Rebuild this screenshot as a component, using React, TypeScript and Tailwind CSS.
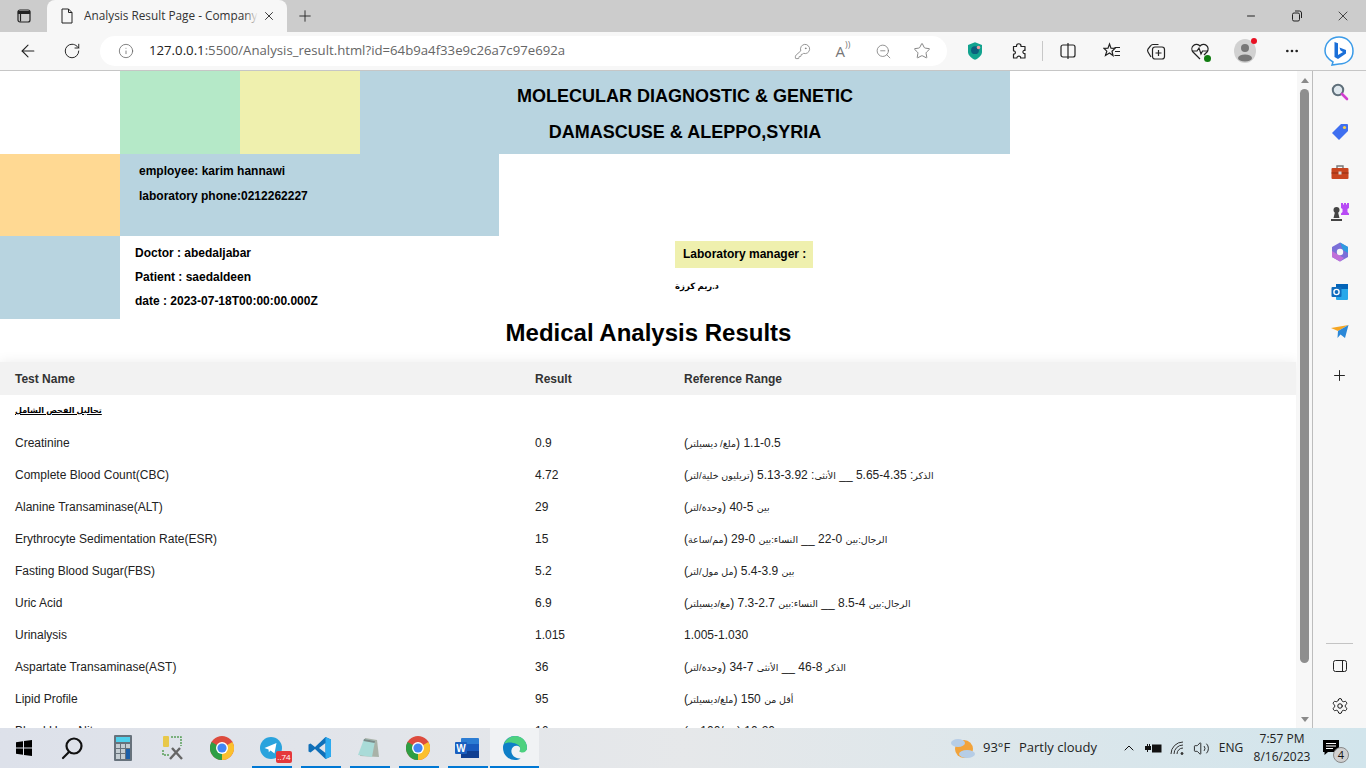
import { ArrowLeft, ChevronUp, Info, Minus, MoreHorizontal, Plus, RotateCw, Settings, Star, Volume2, X, ZoomOut, KeyRound } from 'lucide-react'

const rows = [
  { name: 'Creatinine', result: '0.9', range: '(ملغ/ ديسيلتر) 0.5-1.1' },
  { name: 'Complete Blood Count(CBC)', result: '4.72', range: 'الذكر: 4.35-5.65 __ الأنثى: 3.92-5.13 (تريليون خلية/لتر)' },
  { name: 'Alanine Transaminase(ALT)', result: '29', range: 'بين 5-40 (وحدة/لتر)' },
  { name: 'Erythrocyte Sedimentation Rate(ESR)', result: '15', range: 'الرجال:بين 0-22 __ النساء:بين 0-29 (مم/ساعة)' },
  { name: 'Fasting Blood Sugar(FBS)', result: '5.2', range: 'بين 3.9-5.4 (مل مول/لتر)' },
  { name: 'Uric Acid', result: '6.9', range: 'الرجال:بين 4-8.5 __ النساء:بين 2.7-7.3 (مغ/ديسيلتر)' },
  { name: 'Urinalysis', result: '1.015', range: '1.005-1.030' },
  { name: 'Aspartate Transaminase(AST)', result: '36', range: 'الذكر 8-46 __ الأنثى 7-34 (وحدة/لتر)' },
  { name: 'Lipid Profile', result: '95', range: 'أقل من 150 (ملغ/ديسيلتر)' },
  { name: 'Blood Urea Nitrogen', result: '16', range: '(ملغ/100مل) 20-10' },
]

// Arabic runs sit smaller than the digits beside them
function RangeText({ text }: { text: string }) {
  const parts = text.split(/([\u0600-\u06FF]+(?:[/: ]*[\u0600-\u06FF]+)*)/)
  return (
    <>
      {parts.map((part, i) =>
        /[\u0600-\u06FF]/.test(part) ? (
          <span key={i} className="text-[9.5px]">{part}</span>
        ) : (
          <span key={i}>{part}</span>
        )
      )}
    </>
  )
}

function ChromeIcon() {
  return (
    <svg width="24" height="24" viewBox="0 0 24 24">
      <circle cx="12" cy="12" r="12" fill="#dd4b3e" />
      <path d="M12 12 L1.6 6 A12 12 0 0 0 12 24 Z" fill="#2f9e44" />
      <path d="M12 12 L12 24 A12 12 0 0 0 22.4 6 Z" fill="#fbc02d" />
      <circle cx="12" cy="12" r="6" fill="#fff" />
      <circle cx="12" cy="12" r="4.6" fill="#4285f4" />
    </svg>
  )
}

function TaskIcon({ children, marked = true }: { children: React.ReactNode; marked?: boolean }) {
  return (
    <div className="relative w-[49px] h-10 flex items-center justify-center">
      {children}
      {marked && <div className="absolute bottom-0 left-[6px] right-[3px] h-[2px] bg-[#0078d4]" />}
    </div>
  )
}

function ToolIcon({ children }: { children: React.ReactNode }) {
  return <div className="w-11 h-[38px] flex items-center justify-center shrink-0 text-[#222]">{children}</div>
}

function SideIcon({ children }: { children: React.ReactNode }) {
  return <div className="h-10 flex items-center justify-center">{children}</div>
}

export default function App() {
  return (
    <div className="w-[1366px] h-[768px] overflow-hidden flex flex-col bg-white font-['Liberation_Sans','DejaVu_Sans',sans-serif]">
      {/* Tab strip */}
      <div className="h-8 bg-[#cccccc] flex shrink-0">
        <div className="w-[47px] flex items-center justify-center">
          <svg width="16" height="16" viewBox="0 0 16 16" fill="none" stroke="#222" strokeWidth="1.2">
            <rect x="2" y="2" width="12" height="12" rx="2" />
            <path d="M2.5 3.5 H13.5 V5.5 H2.5 Z M4.5 5.5 V13.5" fill="#222" />
          </svg>
        </div>
        <div className="w-[240px] bg-[#f7f7f7] rounded-t-lg flex items-center pl-[13px] font-['Open_Sans',sans-serif]">
          <svg width="14" height="16" viewBox="0 0 14 16" fill="none" stroke="#222" strokeWidth="1">
            <path d="M2 1 H8.5 L12 4.5 V15 H2 Z M8.5 1 V4.5 H12" />
          </svg>
          <div className="relative ml-[10px] w-[174px] overflow-hidden">
            <div className="whitespace-nowrap text-[11.8px] text-[#333]">Analysis Result Page - Company o</div>
            <div className="absolute inset-y-0 right-0 w-[14px] bg-gradient-to-r from-transparent to-[#f7f7f7]" />
          </div>
          <X size={14} strokeWidth={1.5} className="ml-[4px] text-[#222]" />
        </div>
        <div className="w-[36px] flex items-center justify-center">
          <Plus size={18} strokeWidth={1.2} className="text-[#222]" />
        </div>
        <div className="flex-1" />
        <div className="w-[46px] flex items-center justify-center"><Minus size={12} className="text-[#222]" /></div>
        <div className="w-[46px] flex items-center justify-center">
          <svg width="12" height="12" viewBox="0 0 12 12" fill="none" stroke="#222">
            <rect x="1.5" y="3" width="7" height="8" rx="1.5" />
            <path d="M4 1 H8.5 A2 2 0 0 1 10.5 3 V8" />
          </svg>
        </div>
        <div className="w-[46px] flex items-center justify-center"><X size={16} strokeWidth={1.2} className="text-[#222]" /></div>
      </div>

      {/* Toolbar */}
      <div className="h-[39px] bg-[#f7f7f7] border-b border-[#c6c6c6] flex items-center pl-[6px] shrink-0">
        <ToolIcon><ArrowLeft size={20} strokeWidth={1.3} /></ToolIcon>
        <ToolIcon><RotateCw size={18} strokeWidth={1.3} /></ToolIcon>
        <div className="ml-[6px] w-[847px] h-[30px] bg-white rounded-full flex items-center pl-[18px] shrink-0">
          <Info size={16} strokeWidth={1.2} className="text-[#666]" />
          <span className="ml-[15px] text-[13.2px] font-['Open_Sans',sans-serif] text-[#666] w-[620px]">
            <span className="text-[#222]">127.0.0.1</span>:5500/Analysis_result.html?id=64b9a4f33e9c26a7c97e692a
          </span>
          <div className="ml-auto flex items-center text-[#777]">
            <div className="w-10 flex justify-center"><KeyRound size={17} strokeWidth={1.1} /></div>
            <div className="w-[42px] flex justify-center text-[15px] font-['Open_Sans',sans-serif]">A<span className="text-[9px] -mt-[2px]">))</span></div>
            <div className="w-[38px] flex justify-center"><ZoomOut size={17} strokeWidth={1.1} /></div>
            <div className="w-10 flex justify-center mr-[5px]"><Star size={18} strokeWidth={1.2} /></div>
          </div>
        </div>
        <div className="ml-[6px]"><ToolIcon>
          <svg width="14" height="18" viewBox="0 0 16 20">
            <path d="M8 0 L16 3 V11 C16 15 12 18 8 20 C4 18 0 15 0 11 V3 Z" fill="#12a38f" />
            <circle cx="8" cy="9" r="4.5" fill="#0c5f7d" />
            <circle cx="12" cy="6" r="2" fill="#f0a0a0" />
          </svg>
        </ToolIcon></div>
        <ToolIcon>
          <svg width="18" height="18" viewBox="0 0 18 18" fill="none" stroke="#222" strokeWidth="1.2" strokeLinejoin="round">
            <path d="M6.5 4 C6.5 1 11 1 11 4 V4.5 H15 V8.5 C12.5 7.5 12 12 15 11.5 V16 H10.5 C11.5 13.5 6.5 13.5 7 16 H3.5 V12 C6 12.5 6 8.5 3.5 9 V4.5 H6.5 Z" />
          </svg>
        </ToolIcon>
        <div className="w-px h-5 bg-[#c8c8c8] mx-[1px]" />
        <div className="ml-[2px]"><ToolIcon>
          <svg width="18" height="18" viewBox="0 0 18 18" fill="none" stroke="#222" strokeWidth="1.2">
            <rect x="2" y="3" width="14" height="12" rx="2" />
            <path d="M9 1 V17" />
          </svg>
        </ToolIcon></div>
        <ToolIcon>
          <svg width="18" height="18" viewBox="0 0 18 18" fill="none" stroke="#222" strokeWidth="1.2">
            <path d="M6.5 2 L8 6.2 L12 6.4 L9 9.2 L10 13.5 L6.5 11 L2.5 13.5 L3.8 9.2 L1 6.4 L5 6.2 Z" />
            <path d="M11.5 5.5 H17 M12 9.5 H17 M11.5 13.5 H17" />
          </svg>
        </ToolIcon>
        <ToolIcon>
          <svg width="20" height="20" viewBox="0 0 20 20" fill="none" stroke="#222" strokeWidth="1.2">
            <rect x="6.5" y="6" width="12" height="12" rx="2.5" />
            <path d="M12.5 9 V15 M9.5 12 H15.5" />
            <path d="M12.5 3.5 H7 A3 3 0 0 0 4.5 5 L2 8 A3 3 0 0 0 2 11 L5 16" />
          </svg>
        </ToolIcon>
        <ToolIcon>
          <div className="relative">
            <svg width="20" height="20" viewBox="0 0 20 20" fill="none" stroke="#222" strokeWidth="1.2">
              <path d="M10 18 L3 11 A4.5 4.5 0 0 1 10 5 A4.5 4.5 0 0 1 17 11 L14 14" />
              <path d="M2 10 H7 L9 7 L11 13 L12.5 10 H18" />
            </svg>
            <div className="absolute -bottom-[1px] -right-[1px] w-[7px] h-[7px] rounded-full bg-[#107c10]" />
          </div>
        </ToolIcon>
        <div className="ml-[1px]"><ToolIcon>
          <div className="relative">
            <svg width="22" height="24" viewBox="0 0 22 24">
              <ellipse cx="11" cy="12" rx="11" ry="12" fill="#d1d1d1" />
              <circle cx="11" cy="9" r="4" fill="#777" />
              <ellipse cx="11" cy="19" rx="7" ry="3.6" fill="#777" />
            </svg>
            <div className="absolute -top-[1px] -right-[1px] w-[6px] h-[6px] rounded-full bg-[#e81123]" />
          </div>
        </ToolIcon></div>
        <div className="ml-[3px]"><ToolIcon><MoreHorizontal size={16} strokeWidth={2} /></ToolIcon></div>
        <div className="ml-[3px]"><ToolIcon>
          <svg width="32" height="32" viewBox="0 0 32 32">
            <path d="M16 2 C24 2 30 8 30 16 C30 24 24 29 16 29 L9 30 L10 27 C5 24 2 21 2 16 C2 8 8 2 16 2 Z" fill="#fff" stroke="#3b9be8" strokeWidth="1.5" />
            <path d="M11.5 7 L15 8.3 V20 L20 17 L17.5 15.6 L16.5 12.5 L23 15 V18.6 L15 24 L11.5 22 Z" fill="#1b6fd8" />
          </svg>
        </ToolIcon></div>
      </div>

      {/* Browser body */}
      <div className="h-[657px] flex shrink-0">
        <main className="w-[1297px] overflow-hidden text-xs text-black">
          <div className="flex h-[83px]">
            <div className="w-[120px]" />
            <div className="w-[120px] bg-[#b5e9c8]" />
            <div className="w-[120px] bg-[#eff0ae]" />
            <div className="w-[650px] bg-[#b8d4e0] flex flex-col items-center pt-[16px] gap-[18px] text-lg leading-[18px] font-bold">
              <div>MOLECULAR DIAGNOSTIC &amp; GENETIC</div>
              <div>DAMASCUSE &amp; ALEPPO,SYRIA</div>
            </div>
          </div>
          <div className="flex h-[82px]">
            <div className="w-[120px] bg-[#ffd993]" />
            <div className="w-[379px] bg-[#b8d4e0] pl-[19px] pt-[10px] font-bold leading-[14px] flex flex-col gap-[11px]">
              <div>employee: karim hannawi</div>
              <div>laboratory phone:0212262227</div>
            </div>
          </div>
          <div className="flex h-[83px]">
            <div className="w-[120px] bg-[#b8d4e0]" />
            <div className="w-[555px] pl-[15px] pt-[10px] font-bold leading-[14px] flex flex-col gap-[10px]">
              <div>Doctor : abedaljabar</div>
              <div>Patient : saedaldeen</div>
              <div>date : 2023-07-18T00:00:00.000Z</div>
            </div>
            <div className="pt-[5px] font-bold">
              <div className="w-[138px] h-[27px] bg-[#eff0ae] pl-2 leading-[27px]">Laboratory manager :</div>
              <div className="mt-[11px] text-[8.5px] leading-[14px]">د.ريم كرزة</div>
            </div>
          </div>
          <h1 className="h-[43px] text-center text-2xl leading-[27px] font-bold">Medical Analysis Results</h1>
          <table className="w-[1296px] table-fixed border-collapse shadow-[0_0_12px_rgba(0,0,0,0.08)]">
            <colgroup>
              <col className="w-[520px]" />
              <col className="w-[149px]" />
              <col />
            </colgroup>
            <thead>
              <tr className="h-[33px] bg-[#f2f2f2] text-[#333] text-left">
                <th className="pl-[15px] font-bold">Test Name</th>
                <th className="pl-[15px] font-bold">Result</th>
                <th className="pl-[15px] font-bold">Reference Range</th>
              </tr>
            </thead>
            <tbody className="text-[#222]">
              <tr className="h-8">
                <td className="pl-[15px] font-bold text-[8px] underline text-black">تحاليل الفحص الشامل</td>
                <td />
                <td />
              </tr>
              {rows.map((row) => (
                <tr key={row.name} className="h-8">
                  <td className="pl-[15px]">{row.name}</td>
                  <td className="pl-[15px]">{row.result}</td>
                  <td className="pl-[15px]"><RangeText text={row.range} /></td>
                </tr>
              ))}
            </tbody>
          </table>
        </main>

        {/* Scrollbar */}
        <div className="w-[15px] bg-[#f7f7f7] flex flex-col items-center shrink-0">
          <div className="h-[18px] flex items-center justify-center">
            <div className="w-0 h-0 border-x-4 border-x-transparent border-b-[5px] border-b-[#8a8a8a]" />
          </div>
          <div className="w-[9px] h-[574px] bg-[#8e8e8e] rounded-full" />
          <div className="mt-auto h-[18px] flex items-center justify-center">
            <div className="w-0 h-0 border-x-4 border-x-transparent border-t-[5px] border-t-[#8a8a8a]" />
          </div>
        </div>

        {/* Edge sidebar */}
        <aside className="flex-1 bg-[#f7f7f7] border-l border-[#bdbdbd] flex flex-col items-center pt-[1px]">
          <SideIcon>
            <svg width="18" height="18" viewBox="0 0 18 18" fill="none">
              <circle cx="7" cy="7" r="5.2" fill="#dfe8ee" stroke="#5f6f7a" strokeWidth="2" />
              <path d="M11 11 L16 16" stroke="#d23fd0" strokeWidth="2.6" strokeLinecap="round" />
            </svg>
          </SideIcon>
          <SideIcon>
            <svg width="18" height="18" viewBox="0 0 18 18">
              <path d="M10 1 H16 A1 1 0 0 1 17 2 V8 L8 17 L1 10 Z" fill="#3f6ff0" />
              <circle cx="13.5" cy="4.5" r="1.6" fill="#fbd24c" />
            </svg>
          </SideIcon>
          <SideIcon>
            <svg width="18" height="16" viewBox="0 0 18 16">
              <path d="M6 4 V2 H12 V4" fill="none" stroke="#777" strokeWidth="1.4" />
              <rect x="0.5" y="4" width="17" height="11" rx="1" fill="#c8451f" />
              <rect x="0.5" y="8.5" width="17" height="1" fill="#8e2f13" />
              <rect x="7.5" y="7.5" width="3" height="3" fill="#d9d9d9" />
            </svg>
          </SideIcon>
          <SideIcon>
            <svg width="20" height="20" viewBox="0 0 20 20">
              <circle cx="6.5" cy="8" r="3" fill="#444" />
              <path d="M5 10 H8 L9.5 16 H3.5 Z M1 17 H12 V19 H1 Z" fill="#444" />
              <path d="M11 1 H13 V2.5 H14 V1 H16 V2.5 H17 V1 H19 V6 L17.5 7 V10 L19 11.5 V13 H11 V11.5 L12.5 10 V7 L11 6 Z" fill="#b84bf5" />
            </svg>
          </SideIcon>
          <SideIcon>
            <svg width="18" height="20" viewBox="0 0 18 20">
              <path d="M9 0.5 L17 5 V15 L9 19.5 L1 15 V5 Z" fill="#7a6fd8" />
              <path d="M9 0.5 L17 5 V11 L12 8 Z" fill="#2e9be0" />
              <path d="M1 9 L6 12 L13 16 L9 19.5 L1 15 Z" fill="#c06fd8" />
              <circle cx="9" cy="10" r="3.2" fill="#f7f7f7" />
            </svg>
          </SideIcon>
          <SideIcon>
            <svg width="18" height="18" viewBox="0 0 18 18">
              <rect x="5" y="1" width="12" height="16" rx="1" fill="#28a8ea" />
              <rect x="5" y="1" width="12" height="5" fill="#0364b8" />
              <rect x="0.5" y="4" width="10" height="10" rx="1" fill="#0f6cbd" />
              <circle cx="5.5" cy="9" r="2.6" fill="none" stroke="#fff" strokeWidth="1.4" />
            </svg>
          </SideIcon>
          <SideIcon>
            <svg width="18" height="14" viewBox="0 0 18 14">
              <path d="M0 3 L17.5 0 L7 6 Z" fill="#f5a623" />
              <path d="M17.5 0 L14 13 L9.5 9.5 L6.5 13 L7 6 Z" fill="#2b88d8" />
            </svg>
          </SideIcon>
          <div className="h-[46px] flex items-center justify-center">
            <Plus size={17} strokeWidth={1.4} className="text-[#222]" />
          </div>
          <div className="flex-1" />
          <div className="w-[27px] h-px bg-[#c4c4c4] mb-[2px]" />
          <SideIcon>
            <svg width="14" height="12" viewBox="0 0 14 12" fill="none" stroke="#222" strokeWidth="1">
              <rect x="0.5" y="0.5" width="13" height="11" rx="2" />
              <path d="M9.5 0.5 V11.5" />
            </svg>
          </SideIcon>
          <div className="h-10 mb-[2px] flex items-center justify-center">
            <Settings size={18} strokeWidth={1.3} className="text-[#111]" />
          </div>
        </aside>
      </div>

      {/* Taskbar */}
      <div className="h-10 flex items-center bg-gradient-to-r from-[#dde1ea] via-[#e6e8ea] to-[#d2e5ec] font-['Open_Sans',sans-serif] shrink-0">
        <div className="w-[47px] flex justify-center">
          <svg width="16" height="16" viewBox="0 0 16 16" fill="#000">
            <path d="M0 2.2 L7 1.2 V7.5 H0 Z M8 1 L16 0 V7.5 H8 Z M0 8.5 H7 V14.8 L0 13.8 Z M8 8.5 H16 V16 L8 15 Z" />
          </svg>
        </div>
        <div className="w-[50px] flex justify-center">
          <svg width="24" height="24" viewBox="0 0 24 24" fill="none" stroke="#111" strokeWidth="2.2">
            <circle cx="14" cy="10" r="7.5" />
            <path d="M9 16 L3 22" strokeLinecap="round" />
          </svg>
        </div>
        <div className="w-[51px] flex justify-center">
          <svg width="18" height="26" viewBox="0 0 18 26">
            <rect width="18" height="26" rx="1" fill="#67727c" />
            <rect x="2" y="2" width="14" height="5" fill="#4fd0ec" />
            <rect x="2" y="9" width="4" height="4" fill="#c4cdd3" />
            <rect x="7" y="9" width="4" height="4" fill="#c4cdd3" />
            <rect x="12" y="9" width="4" height="4" fill="#c4cdd3" />
            <rect x="2" y="14" width="4" height="4" fill="#c4cdd3" />
            <rect x="7" y="14" width="4" height="4" fill="#c4cdd3" />
            <rect x="2" y="19" width="4" height="5" fill="#c4cdd3" />
            <rect x="7" y="19" width="4" height="5" fill="#c4cdd3" />
            <rect x="12" y="14" width="4" height="10" fill="#1c5fa8" />
          </svg>
        </div>
        <div className="w-[49px] flex justify-center">
          <svg width="24" height="26" viewBox="0 0 24 26" fill="none">
            <rect x="2" y="1" width="6" height="11" rx="1" fill="#e8c84a" />
            <path d="M10 2 H20 V11 M2 15 V20 H9" stroke="#5aa05a" strokeWidth="1.5" strokeDasharray="2 1" />
            <path d="M9 24 L19 13 M11 13 L21 24" stroke="#666" strokeWidth="2.4" />
          </svg>
        </div>
        <div className="w-[49px] flex justify-center"><ChromeIcon /></div>
        <TaskIcon>
          <svg width="22" height="22" viewBox="0 0 22 22">
            <circle cx="11" cy="11" r="11" fill="#2aa3dd" />
            <path d="M4.5 11 L16.5 6 L14.5 16.5 L10.5 13.6 L8.8 15.2 L8.5 12.4 Z" fill="#fff" />
          </svg>
          <span className="absolute right-[3px] top-[23px] w-[16px] h-[12px] rounded-[2px] bg-[#e5383b] text-[8px] leading-[12px] text-center text-white">..74</span>
        </TaskIcon>
        <TaskIcon>
          <svg width="24" height="24" viewBox="0 0 24 24">
            <path d="M17.5 1 L23 3.5 V20.5 L17.5 23 L7 13 L2.5 16.5 L0.5 15.5 V8.5 L2.5 7.5 L7 11 Z M17.5 7 L11 12 L17.5 17 Z" fill="#0f6fb8" />
            <path d="M17.5 1 L23 3.5 V20.5 L17.5 23 Z" fill="#2cabf0" />
          </svg>
        </TaskIcon>
        <TaskIcon>
          <svg width="24" height="24" viewBox="0 0 24 24">
            <path d="M8 2 L20 4 L22 21 L3 20 Z" fill="#a9b2a8" />
            <path d="M7 3 L18 5 L15 21 L1 19 Z" fill="#a9dbd8" />
            <path d="M7 3 L18 5 L17.6 7 L6.5 5 Z" fill="#7a8a88" />
          </svg>
        </TaskIcon>
        <TaskIcon><ChromeIcon /></TaskIcon>
        <TaskIcon>
          <svg width="24" height="24" viewBox="0 0 24 24">
            <rect x="6" y="2" width="18" height="20" rx="1" fill="#2b7cd3" />
            <rect x="6" y="8" width="18" height="7" fill="#185abd" />
            <rect x="6" y="15" width="18" height="7" fill="#103f91" />
            <rect x="0" y="6" width="12" height="12" rx="1" fill="#1a5fbf" />
            <text x="6" y="15.5" textAnchor="middle" fontSize="10" fontWeight="700" fill="#fff" fontFamily="Liberation Sans">W</text>
          </svg>
        </TaskIcon>
        <div className="relative w-[49px] h-10 bg-[#f0f2f4] flex items-center justify-center ml-[-1px]">
          <svg width="24" height="24" viewBox="0 0 24 24">
            <path d="M12 0 A12 12 0 0 0 12 24 C14 24 16 23.4 17.6 22.4 C12 23 8 19 8.4 14.5 C8.8 11 12 9 15 10 C18 11 18 14 16.5 15 C19 17 24 15.5 24 12 C24 5 18.5 0 12 0 Z" fill="#0f7fc7" />
            <path d="M1 8 C3 3 8 0 12 0 C19 0 24 5 24 12 C24 15 21.5 17 18.5 16.5 C16.5 16 16 15.5 16.5 15 C18 13.5 17.5 10 13.5 8 C9 6 4 6 1 8 Z" fill="#4dd17f" />
          </svg>
          <div className="absolute bottom-0 inset-x-0 h-[2px] bg-[#0078d4]" />
        </div>

        <div className="flex-1" />

        <div className="w-[26px] h-6 mr-[7px]">
          <svg width="26" height="24" viewBox="0 0 26 24">
            <circle cx="14" cy="13" r="9" fill="#f2a33a" />
            <ellipse cx="8" cy="7" rx="7" ry="4" fill="#b6cde6" />
            <ellipse cx="17" cy="18" rx="8" ry="4" fill="#b6cde6" />
          </svg>
        </div>
        <span className="text-[13px] text-[#222] w-[36px]">93°F</span>
        <span className="text-[13px] text-[#222] w-[98px]">Partly cloudy</span>
        <div className="w-[24px] flex justify-center"><ChevronUp size={16} strokeWidth={1.5} className="text-[#111]" /></div>
        <div className="w-[25px] flex justify-center">
          <svg width="17" height="11" viewBox="0 0 17 11">
            <path d="M0 3 H2 V1 H3 V3 H4 V1 H5 V3 H6 V7 H3 V9 H2 V7 H0 Z" fill="#111" />
            <rect x="7" y="1.5" width="9.5" height="8" fill="#111" />
          </svg>
        </div>
        <div className="w-[24px] flex justify-center">
          <svg width="16" height="14" viewBox="0 0 16 14" fill="none" stroke="#333" strokeWidth="1">
            <path d="M1 13 A12 12 0 0 1 13 1 M4 13 A9 9 0 0 1 13 4 M7 13 A6 6 0 0 1 13 7" />
            <circle cx="12" cy="12.5" r="1" fill="#333" />
          </svg>
        </div>
        <div className="w-[22px] flex justify-center"><Volume2 size={17} strokeWidth={1.2} className="text-[#111]" /></div>
        <span className="text-xs text-[#222] w-[30px] text-center ml-[4px]">ENG</span>
        <div className="w-[72px] text-xs leading-[18px] text-[#222] text-center">
          <div>7:57 PM</div>
          <div>8/16/2023</div>
        </div>
        <div className="relative w-[30px] h-10 mr-[18px] flex items-center justify-center">
          <svg width="16" height="16" viewBox="0 0 16 16" className="-mt-[1px] -ml-[5px]">
            <path d="M0 0 H16 V12 H5 L1.5 15 V12 H0 Z" fill="#000" />
            <path d="M3 3.5 H13 M3 6 H13 M3 8.5 H10" stroke="#fff" strokeWidth="1" />
          </svg>
          <span className="absolute left-[15px] top-[19px] w-4 h-4 rounded-full bg-[#d0d0d0] border border-[#888] text-[11px] leading-[14px] text-center text-[#111]">4</span>
        </div>
      </div>
    </div>
  )
}
